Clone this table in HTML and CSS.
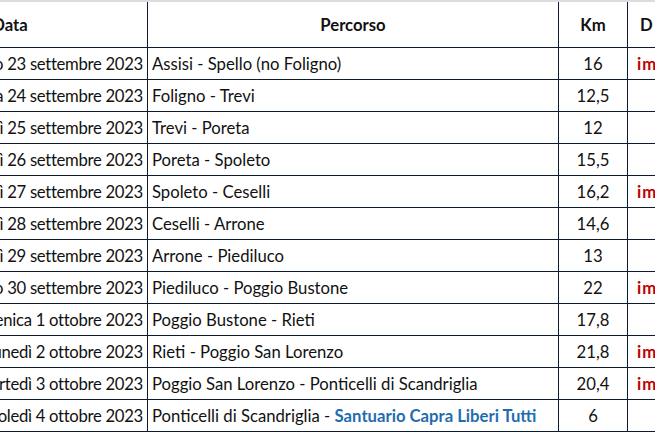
FILE: index.html
```html
<!DOCTYPE html>
<html lang="it">
<head>
<meta charset="utf-8">
<link rel="stylesheet" href="styles.css">
</head>
<body>
<div class="sheet">
  <table class="grid">
    <colgroup>
      <col class="c-date"><col class="c-route"><col class="c-km"><col class="c-note">
    </colgroup>
    <thead>
      <tr>
        <th class="h-date">Data</th>
        <th class="h-route">Percorso</th>
        <th class="h-km">Km</th>
        <th class="h-note">Disponibilità</th>
      </tr>
    </thead>
    <tbody>
      <tr><td class="date">Sabato 23 settembre 2023</td><td class="route">Assisi - Spello (no Foligno)</td><td class="km">16</td><td class="note">impegnato</td></tr>
      <tr><td class="date">Domenica 24 settembre 2023</td><td class="route">Foligno - Trevi</td><td class="km">12,5</td><td class="note"></td></tr>
      <tr><td class="date">Lunedì 25 settembre 2023</td><td class="route">Trevi - Poreta</td><td class="km">12</td><td class="note"></td></tr>
      <tr><td class="date">Martedì 26 settembre 2023</td><td class="route">Poreta - Spoleto</td><td class="km">15,5</td><td class="note"></td></tr>
      <tr><td class="date">Mercoledì 27 settembre 2023</td><td class="route">Spoleto - Ceselli</td><td class="km">16,2</td><td class="note">impegnato</td></tr>
      <tr><td class="date">Giovedì 28 settembre 2023</td><td class="route">Ceselli - Arrone</td><td class="km">14,6</td><td class="note"></td></tr>
      <tr><td class="date">Venerdì 29 settembre 2023</td><td class="route">Arrone - Piediluco</td><td class="km">13</td><td class="note"></td></tr>
      <tr><td class="date">Sabato 30 settembre 2023</td><td class="route">Piediluco - Poggio Bustone</td><td class="km">22</td><td class="note">impegnato</td></tr>
      <tr><td class="date">Domenica 1 ottobre 2023</td><td class="route">Poggio Bustone - Rieti</td><td class="km">17,8</td><td class="note"></td></tr>
      <tr><td class="date">Lunedì 2 ottobre 2023</td><td class="route">Rieti - Poggio San Lorenzo</td><td class="km">21,8</td><td class="note">impegnato</td></tr>
      <tr><td class="date">Martedì 3 ottobre 2023</td><td class="route">Poggio San Lorenzo - Ponticelli di Scandriglia</td><td class="km">20,4</td><td class="note">impegnato</td></tr>
      <tr><td class="date">Mercoledì 4 ottobre 2023</td><td class="route">Ponticelli di Scandriglia - <span class="dest">Santuario Capra Liberi Tutti</span></td><td class="km">6</td><td class="note"></td></tr>
    </tbody>
  </table>
</div>
</body>
</html>
```
FILE: styles.css
```css
html, body {
  margin: 0;
  padding: 0;
  background: #ffffff;
}
body {
  width: 655px;
  height: 433px;
  overflow: hidden;
}
.sheet {
  width: 655px;
  height: 433px;
  overflow: hidden;
  border-top: 2px solid #dcdcdc;
  box-sizing: border-box;
}
.grid {
  border-collapse: collapse;
  table-layout: fixed;
  width: 880px;
  margin-left: -128px;
  font-family: Lato, "Open Sans", sans-serif;
  font-size: 16.7px;
  color: #111;
}
.c-date { width: 275px; }
.c-route { width: 411px; }
.c-km { width: 69px; }
.c-note { width: 125px; }
.grid th, .grid td {
  border: 1px solid #0d1b2e;
  white-space: nowrap;
  overflow: hidden;
  padding: 0 4px;
}
.grid thead th {
  border-top: none;
  height: 45px;
  font-weight: bold;
  text-align: center;
}
.grid tbody td {
  height: 31px;
}
.grid .h-note { text-align: left; padding-left: 12px; letter-spacing: 3px; }
.grid .date { text-align: right; letter-spacing: -0.3px; }
.route { text-align: left; }
.km { text-align: center; }
.grid .note { color: #c00000; font-weight: bold; padding-left: 9px; letter-spacing: 1px; }
.dest { color: #1f6db0; font-weight: bold; }
```
